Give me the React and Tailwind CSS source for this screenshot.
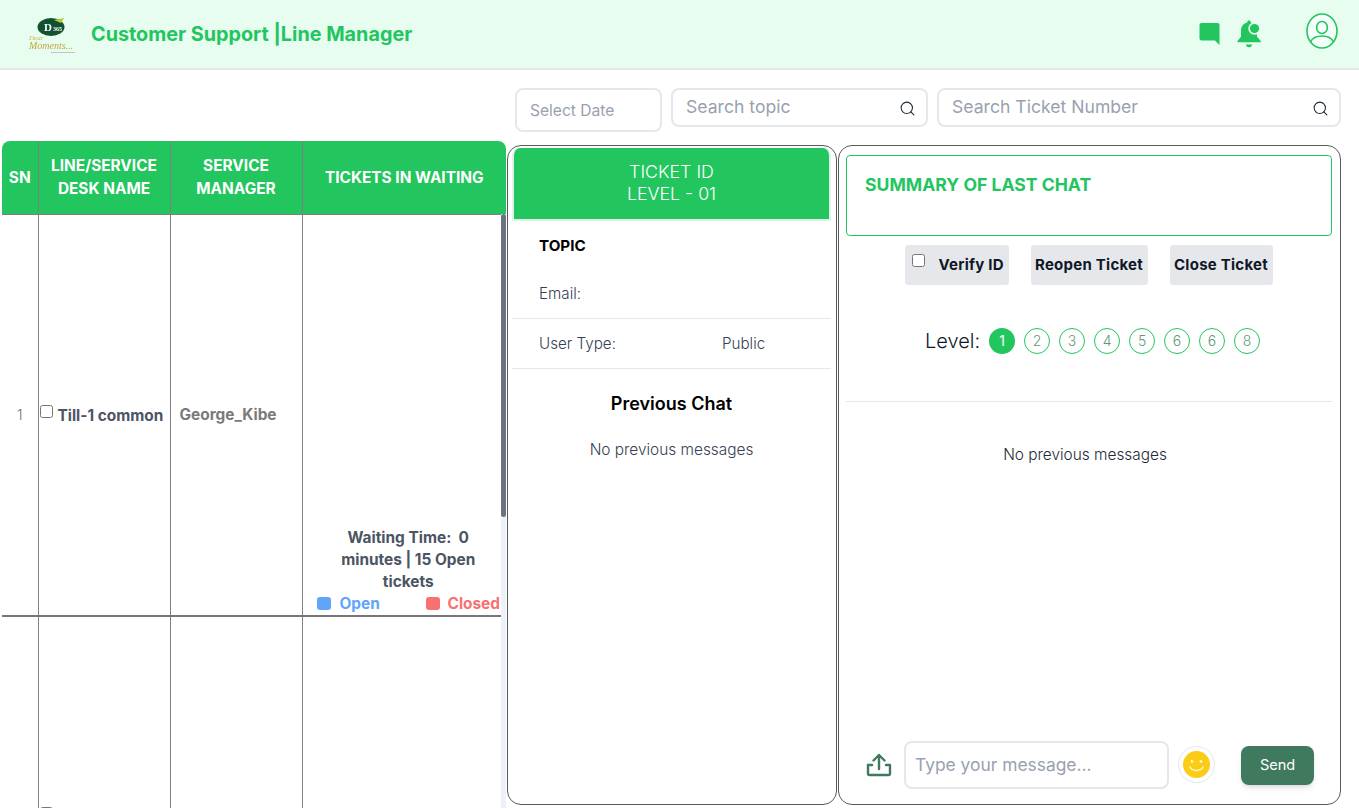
import { Search } from 'lucide-react';

const levels = ['2', '3', '4', '5', '6', '6', '8'];

// Logo is a small blurry badge with a script wordmark under it
const Logo = () => (
  <svg width="50" height="38" viewBox="0 0 50 38" className="mt-[6px]" style={{ filter: 'blur(0.5px)' }}>
    <ellipse cx="25" cy="9" rx="13.500" ry="9" fill="#14532d" />
    <ellipse cx="25" cy="9" rx="10.500" ry="6.500" fill="#0f5132" />
    <path d="M28 2 L38 0 L35 5 Z" fill="#b5c934" />
    <text x="18" y="13" fontSize="11" fontWeight="700" fill="#fff" fontFamily="Liberation Serif, serif">D</text>
    <text x="27" y="13" fontSize="6" fontWeight="700" fill="#fff" fontFamily="Liberation Serif, serif">365</text>
    <text x="3" y="22" fontSize="7" fontStyle="italic" fill="#c8b94a" fontFamily="Liberation Serif, serif">Dear</text>
    <text x="3" y="31" fontSize="10" fontStyle="italic" fill="#c2a93a" fontFamily="Liberation Serif, serif" textLength="44">Moments...</text>
    <rect x="25" y="34" width="24" height="1" fill="#c4c4c4" />
  </svg>
);

const ChatIcon = () => (
  <svg width="21" height="23" viewBox="0 0 21 23" fill="#22c55e">
    <path d="M2.500 1h16a2 2 0 0 1 2 2v20l-4.500-4.500H2.500a2 2 0 0 1-2-2V3a2 2 0 0 1 2-2z" />
  </svg>
);

const BellIcon = () => (
  <svg width="26" height="28" viewBox="0 0 26 28">
    <path
      fill="#22c55e"
      d="M12 0.500c1 0 1.700.700 1.700 1.700v.400c3.600.800 6.300 4 6.300 7.900v6.200l3.800 4.300v1.200H0.500v-1.200l3.500-4.300v-6.200c0-3.900 2.600-7.100 6.300-7.900v-.400c0-1 .700-1.700 1.700-1.700zM9 24.500h6c0 1.700-1.300 2.800-3 2.800s-3-1.100-3-2.800z"
    />
    <circle cx="17.500" cy="8.500" r="6.200" fill="#e6fdf0" />
    <circle cx="17.500" cy="8.500" r="4.600" fill="#22c55e" />
  </svg>
);

const ProfileIcon = () => (
  <svg width="32" height="36" viewBox="0 0 32 36" fill="none" stroke="#22c55e" strokeWidth="1.600">
    <ellipse cx="16" cy="18" rx="15" ry="17" fill="#f3fff8" />
    <ellipse cx="16" cy="14.500" rx="5.400" ry="6" />
    <path d="M4.500 29c2-4.500 6.500-6 11.500-6s9.500 1.500 11.500 6" />
  </svg>
);

const UploadIcon = () => (
  <svg width="26" height="24" viewBox="0 0 26 24" fill="none" stroke="#3f7a5f" strokeWidth="2.400" strokeLinecap="round" strokeLinejoin="round">
    <path d="M13 16V2M7.500 7.500 13 2l5.500 5.500" />
    <path d="M2 12v8.500a1.500 1.500 0 0 0 1.500 1.500h19a1.500 1.500 0 0 0 1.500-1.500V12h-4" />
    <path d="M2 12h4" />
  </svg>
);

const EmojiButton = () => (
  <div className="flex h-[37px] w-[37px] items-center justify-center rounded-full border border-gray-200 bg-white">
    <svg width="27" height="27" viewBox="0 0 27 27">
      <circle cx="13.500" cy="13.500" r="13.500" fill="#facc15" />
      <circle cx="9" cy="10.500" r="1.400" fill="#fff7cc" />
      <circle cx="18" cy="10.500" r="1.400" fill="#fff7cc" />
      <path d="M7 16c2 4.500 11 4.500 13 0" fill="none" stroke="#fff7cc" strokeWidth="1.500" strokeLinecap="round" />
    </svg>
  </div>
);

const Header = () => (
  <header className="flex h-[70px] items-center border-b-2 border-gray-200 bg-[#e6fdf0] pl-[26px] pr-[21px]">
    <Logo />
    <h1 className="ml-[15px] mt-[1px] text-[19.800px] font-bold text-[#22c55e]">Customer Support |Line Manager</h1>
    <div className="ml-auto flex items-center">
      <div className="mb-[2px]">
        <ChatIcon />
      </div>
      <div className="mb-[1px] ml-[17px] mr-[43px]">
        <BellIcon />
      </div>
      <div className="mb-[7px]">
        <ProfileIcon />
      </div>
    </div>
  </header>
);

const Filters = () => (
  <div className="flex h-[71px] justify-end gap-[9px] pr-[18px] pt-[18px]">
    <div className="flex h-[44px] w-[147px] items-center rounded-lg border-2 border-gray-200 pl-[13px] pt-[1px] text-[15.600px] text-gray-400">Select Date</div>
    <div className="flex h-[39px] w-[257px] items-center justify-between rounded-lg border-2 border-gray-200 pl-[13px] pr-[10px] text-[17.600px] text-gray-400">
      Search topic
      <Search size={17} strokeWidth={1.500} className="mt-[2px] text-gray-800" />
    </div>
    <div className="flex h-[39px] w-[404px] items-center justify-between rounded-lg border-2 border-gray-200 pl-[13px] pr-[10px] text-[17.600px] text-gray-400">
      Search Ticket Number
      <Search size={17} strokeWidth={1.500} className="mt-[2px] text-gray-800" />
    </div>
  </div>
);

const TicketTable = () => (
  <div className="relative ml-[2px] w-[504px] shrink-0 overflow-hidden">
    <table className="w-full table-fixed border-collapse">
      <thead>
        <tr className="h-[73px] bg-[#22c55e] text-[15.400px] font-bold leading-[23px] text-white">
          <th className="w-[36px] rounded-tl-lg border-r border-[#808080] font-bold">SN</th>
          <th className="w-[132px] border-r border-[#808080] font-bold">LINE/SERVICE DESK NAME</th>
          <th className="w-[132px] border-r border-[#808080] font-bold">SERVICE<br />MANAGER</th>
          <th className="rounded-tr-lg font-bold">TICKETS IN WAITING</th>
        </tr>
      </thead>
      <tbody>
        <tr className="h-[402px] border-b-2 border-[#777777]">
          <td className="border-r border-t border-[#808080] text-center text-sm font-light text-[#6b7280]">1</td>
          <td className="whitespace-nowrap border-r border-t border-[#808080] pl-[1px]">
            <input type="checkbox" className="mr-[5px] align-[3px]" />
            <span className="text-[15.400px] font-bold text-[#4b5563]">Till-1 common</span>
          </td>
          <td className="border-r border-t border-[#808080] pl-[9px] text-[15.400px] font-bold text-[#7a7a7a]">George_Kibe</td>
          <td className="border-t border-[#808080] pl-[14px] pr-[6px] align-bottom">
            <p className="px-[10px] text-center text-[15.400px] font-bold leading-[22px] text-[#4b5563]">
              Waiting Time:&nbsp; 0 minutes | 15 Open tickets
            </p>
            <div className="flex h-[22px] items-center pb-[1px] text-[15.400px] font-bold">
              <span className="h-[13px] w-[14px] rounded-[3px] bg-[#60a5fa]" />
              <span className="ml-[9px] text-[#60a5fa]">Open</span>
              <span className="ml-auto h-[13px] w-[14px] rounded-[3px] bg-[#f87171]" />
              <span className="ml-[8px] text-[#f87171]">Closed</span>
            </div>
          </td>
        </tr>
        <tr className="h-[395px]">
          <td className="border-r border-[#808080]" />
          <td className="border-r border-[#808080] pl-[1px]">
            <input type="checkbox" />
          </td>
          <td className="border-r border-[#808080]" />
          <td />
        </tr>
      </tbody>
    </table>
    {/* scrollbar */}
    <div className="absolute bottom-0 right-0 top-[73px] w-[5px] bg-[#eef2f7]">
      <div className="h-[303px] rounded-full bg-[#6b7280]" />
    </div>
  </div>
);

const TicketPanel = () => (
  <section className="mb-[3px] ml-[1px] mt-[4px] flex w-[330px] shrink-0 flex-col rounded-[14px] border border-[#5a5a5a] pl-[4px] pr-[5px] pt-[2px]">
    <div className="flex h-[73px] flex-col items-center justify-center rounded-t-lg border-b-2 border-l-2 border-r-2 border-[#dff3e7] bg-[#22c55e] pb-[2px] text-[17.800px] leading-[22px] text-white">
      <span className="font-light">TICKET ID</span>
      <span className="font-light">LEVEL - 01</span>
    </div>
    <div className="flex h-[49px] items-center pl-[27px] pt-[1px] text-[15.200px] font-bold text-black">TOPIC</div>
    <div className="flex h-[49px] items-center border-b border-gray-200 pl-[27px] text-[15.200px] font-light text-gray-700">Email:</div>
    <div className="flex h-[50px] items-center border-b border-gray-200 pl-[27px] pt-[1px] text-[15.200px] font-light text-gray-700">
      <span className="w-[183px]">User Type:</span>
      <span>Public</span>
    </div>
    <h2 className="mt-[22px] text-center text-lg font-semibold leading-[26px] text-black">Previous Chat</h2>
    <p className="mt-[23px] text-center text-[15.400px] font-light leading-[20px] text-gray-700">No previous messages</p>
  </section>
);

const ChatPanel = () => (
  <section className="mb-[3px] ml-[1px] mt-[4px] flex w-[503px] shrink-0 flex-col rounded-[14px] border border-[#5a5a5a] pl-[7px] pr-[8px] pt-[9px]">
    <div className="h-[81px] rounded-[4px] border border-[#22c55e] pl-[18px] pt-[17px] text-[17.600px] font-bold leading-[24px] text-[#22c55e]">
      SUMMARY OF LAST CHAT
    </div>
    <div className="mt-[9px] flex justify-center gap-[22px] pr-[1px] text-[15px] font-bold tracking-[0.25px] text-gray-900">
      <div className="flex h-[40px] w-[104px] items-center rounded-[3px] bg-gray-200 pl-[7px]">
        <input type="checkbox" className="mb-[10px] mr-[14px]" />
        Verify ID
      </div>
      <div className="flex h-[40px] w-[117px] items-center justify-center rounded-[3px] bg-gray-200">Reopen Ticket</div>
      <div className="flex h-[40px] w-[103px] items-center justify-center rounded-[3px] bg-gray-200">Close Ticket</div>
    </div>
    <div className="mt-[42px] flex items-center justify-center gap-[9px] pl-[7px]">
      <span className="text-xl font-light text-gray-900">Level:</span>
      <span className="flex h-[26px] w-[26px] items-center justify-center rounded-full bg-[#22c55e] text-sm text-white">1</span>
      {levels.map((level, i) => (
        <span key={i} className="flex h-[26px] w-[26px] items-center justify-center rounded-full border border-[#22c55e] text-sm font-light text-[#5f9a78]">
          {level}
        </span>
      ))}
    </div>
    <div className="mt-[46px] border-t border-gray-200" />
    <p className="mt-[43px] pr-[8px] text-center text-[15.400px] font-light leading-[20px] text-gray-800">No previous messages</p>
    <div className="mb-[15px] mt-auto flex items-center pl-[20px]">
      <UploadIcon />
      <div className="ml-[12px] flex h-[48px] w-[265px] items-center rounded-lg border-2 border-gray-200 pl-[9px] text-[17.400px] text-gray-400">
        Type your message...
      </div>
      <div className="mb-[2px] ml-[9px]">
        <EmojiButton />
      </div>
      <div className="ml-[26px] flex h-[39px] w-[73px] items-center justify-center rounded-lg bg-[#3f7a5f] text-[14.500px] font-normal text-white shadow-md">
        Send
      </div>
    </div>
  </section>
);

export default function App() {
  return (
    <div className="flex h-[808px] flex-col overflow-hidden bg-white font-['Inter',sans-serif]">
      <Header />
      <Filters />
      <main className="flex min-h-0 flex-1">
        <TicketTable />
        <TicketPanel />
        <ChatPanel />
      </main>
    </div>
  );
}
